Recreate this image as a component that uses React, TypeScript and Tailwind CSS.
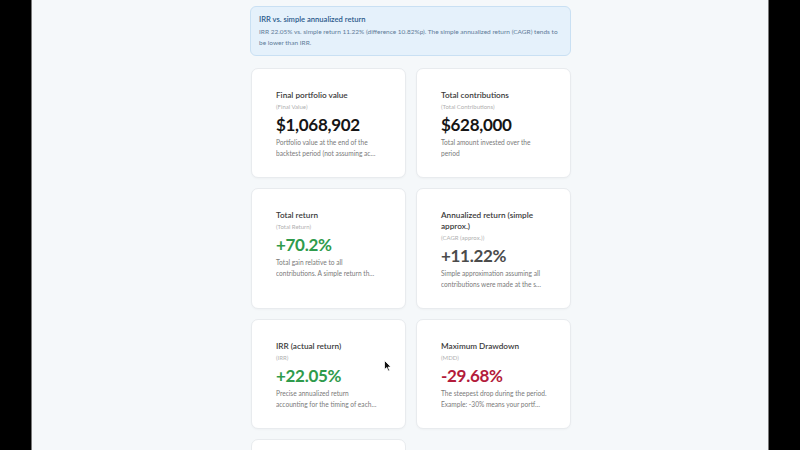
import React from "react";

type Metric = {
  title: string;
  sub: string;
  value: string;
  valueClass: string;
  desc: [string, string];
};

const metrics: Metric[] = [
  {
    title: "Final portfolio value",
    sub: "(Final Value)",
    value: "$1,068,902",
    valueClass: "text-[#151515]",
    desc: ["Portfolio value at the end of the", "backtest period (not assuming actual withdrawals)"],
  },
  {
    title: "Total contributions",
    sub: "(Total Contributions)",
    value: "$628,000",
    valueClass: "text-[#151515]",
    desc: ["Total amount invested over the", "period"],
  },
  {
    title: "Total return",
    sub: "(Total Return)",
    value: "+70.2%",
    valueClass: "text-[#2f9b4c]",
    desc: ["Total gain relative to all", "contributions. A simple return that ignores timing"],
  },
  {
    title: "Annualized return (simple approx.)",
    sub: "(CAGR (approx.))",
    value: "+11.22%",
    valueClass: "text-[#4b4b4b]",
    desc: ["Simple approximation assuming all", "contributions were made at the start"],
  },
  {
    title: "IRR (actual return)",
    sub: "(IRR)",
    value: "+22.05%",
    valueClass: "text-[#2f9b4c]",
    desc: ["Precise annualized return", "accounting for the timing of each contribution"],
  },
  {
    title: "Maximum Drawdown",
    sub: "(MDD)",
    value: "-29.68%",
    valueClass: "text-[#b31b3b]",
    desc: ["The steepest drop during the period.", "Example: -30% means your portfolio fell 30%"],
  },
];

function Card({ m }: { m: Metric }) {
  return (
    <div className="min-w-0 rounded-[7px] border border-[#e8ebee] bg-white px-6 pt-[21px] pb-[18px] shadow-[0_1px_2px_rgba(0,0,0,0.03)]">
      <div className="text-[8.2px] font-semibold leading-[11px] text-[#3a3a3a]">{m.title}</div>
      <div className="text-[6px] leading-[11px] text-[#b0b0b0]">{m.sub}</div>
      <div className={`mt-[1px] text-[17px] font-bold leading-[24px] tracking-[-0.3px] ${m.valueClass}`}>{m.value}</div>
      <div className="text-[6.6px] leading-[11px] text-[#7a7a7a]">
        <div className="whitespace-nowrap">{m.desc[0]}</div>
        <div className="truncate pr-[4px]">{m.desc[1]}</div>
      </div>
    </div>
  );
}

export default function App() {
  return (
    <div className="flex h-[450px] w-[800px] overflow-hidden bg-black" style={{ fontFamily: "'Lato', 'Noto Sans', sans-serif" }}>
      <div className="w-[31px] shrink-0 bg-black" />
      <div className="relative flex h-full flex-1 border-x border-[#7a7a7a] bg-[#f5f8fa] pl-[218px]">
        <div className="flex w-[321px] flex-col pt-[6px]">
          <div className="rounded-[6px] border border-[#c9e0f3] bg-[#e5f1fb] px-[8px] pt-[7px] pb-[7px]">
            <div className="text-[7.6px] font-semibold leading-[11px] text-[#2a5a8c]">IRR vs. simple annualized return</div>
            <div className="mt-[1px] text-[6.5px] font-normal leading-[11px] text-[#5f7c99]">
              IRR 22.05% vs. simple return 11.22% (difference 10.82%p). The simple annualized return (CAGR) tends to be lower than IRR.
            </div>
          </div>
          <div className="mt-[12px] grid grid-cols-2 gap-[10px] pl-[1px]">
            {metrics.map((m) => (
              <Card key={m.title} m={m} />
            ))}
            <div className="h-[40px] rounded-[7px] border border-[#e8ebee] bg-white" />
          </div>
        </div>
        <svg className="absolute left-[352px] top-[360px]" width="8" height="12" viewBox="0 0 8 12">
          <path d="M0.5 0.5 L0.5 9.5 L2.7 7.6 L4.2 11 L5.6 10.4 L4.1 7.1 L7 7 Z" fill="#111" stroke="#fff" strokeWidth="0.8" />
        </svg>
      </div>
      <div className="w-[31px] shrink-0 bg-black" />
    </div>
  );
}
